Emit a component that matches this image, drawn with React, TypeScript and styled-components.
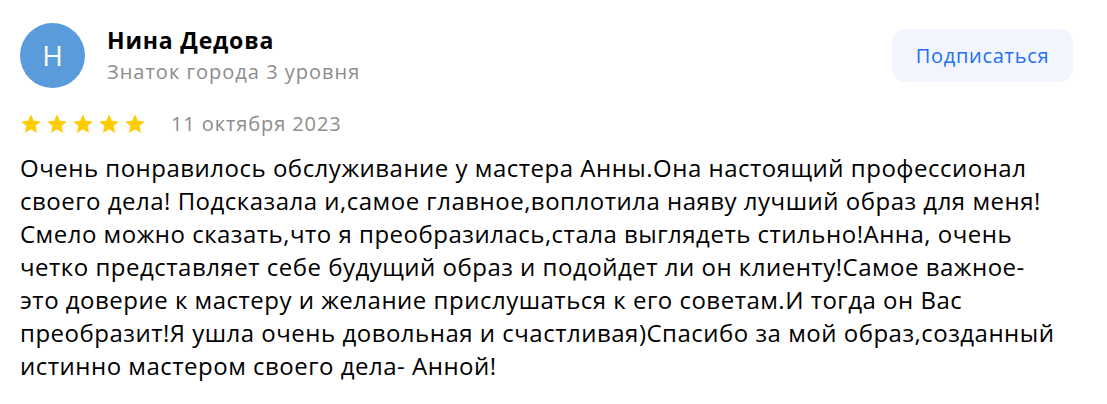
import React from "react";
import styled, { createGlobalStyle } from "styled-components";

const Global = createGlobalStyle`
  html, body { margin: 0; padding: 0; background: #fff; }
  body { font-family: "Open Sans", "Noto Sans", sans-serif; color: #000; }
`;

const Card = styled.div`
  width: 1107px;
  height: 404px;
  box-sizing: border-box;
  padding: 22px 34px 0 20px;
  display: flex;
  flex-direction: column;
`;

const Header = styled.div`
  display: flex;
  align-items: flex-start;
  justify-content: space-between;
`;

const Author = styled.div`
  display: flex;
  align-items: center;
  gap: 22px;
`;

const Avatar = styled.div`
  width: 65px;
  height: 65px;
  border-radius: 50%;
  background: #5a9bdb;
  color: #fff;
  display: flex;
  align-items: center;
  justify-content: center;
  font-size: 28px;
  font-weight: 400;
`;

const Names = styled.div`
  display: flex;
  flex-direction: column;
  margin-top: 2px;
`;

const Name = styled.div`
  font-size: 23px;
  font-weight: 700;
  line-height: 32px;
  letter-spacing: 0.8px;
`;

const Sub = styled.div`
  font-size: 20px;
  color: #8c8c8c;
  line-height: 32px;
  letter-spacing: 1px;
`;

const SubscribeButton = styled.button`
  margin-top: 7px;
  width: 181px;
  height: 53px;
  padding: 0;
  border: none;
  border-radius: 14px;
  background: #f2f5fd;
  color: #226ff5;
  font-family: inherit;
  font-size: 20px;
  font-weight: 500;
  letter-spacing: 0.7px;
  cursor: pointer;
`;

const Meta = styled.div`
  display: flex;
  align-items: center;
  gap: 25px;
  margin-top: 22px;
`;

const Stars = styled.div`
  display: flex;
  gap: 4px;
`;

const DateText = styled.span`
  font-size: 20px;
  color: #8c8c8c;
  letter-spacing: 0.9px;
`;

const Body = styled.p`
  margin: 14px 12px 0 0;
  font-size: 24px;
  line-height: 33px;
  letter-spacing: 0.5px;
  color: #000;
`;

const Star = () => (
  <svg width="22" height="22" viewBox="0 0 24 24">
    <path
      fill="#fc0"
      d="M12 1.5l3.1 7 7.6.7-5.7 5 1.7 7.5L12 17.8l-6.7 3.9L7 14.2l-5.7-5 7.6-.7z"
    />
  </svg>
);

export default function App() {
  return (
    <>
      <Global />
      <Card>
        <Header>
          <Author>
            <Avatar>Н</Avatar>
            <Names>
              <Name>Нина Дедова</Name>
              <Sub>Знаток города 3 уровня</Sub>
            </Names>
          </Author>
          <SubscribeButton>Подписаться</SubscribeButton>
        </Header>
        <Meta>
          <Stars>
            {[0, 1, 2, 3, 4].map((i) => (
              <Star key={i} />
            ))}
          </Stars>
          <DateText>11 октября 2023</DateText>
        </Meta>
        <Body>
          Очень понравилось обслуживание у мастера Анны.Она настоящий профессионал своего дела! Подсказала и,самое главное,воплотила наяву лучший образ для меня! Смело можно сказать,что я преобразилась,стала выглядеть стильно!Анна, очень четко представляет себе будущий образ и подойдет ли он клиенту!Самое важное-это доверие к мастеру и желание прислушаться к его советам.И тогда он Вас преобразит!Я ушла очень довольная и счастливая)Спасибо за мой образ,созданный истинно мастером своего дела- Анной!
        </Body>
      </Card>
    </>
  );
}
